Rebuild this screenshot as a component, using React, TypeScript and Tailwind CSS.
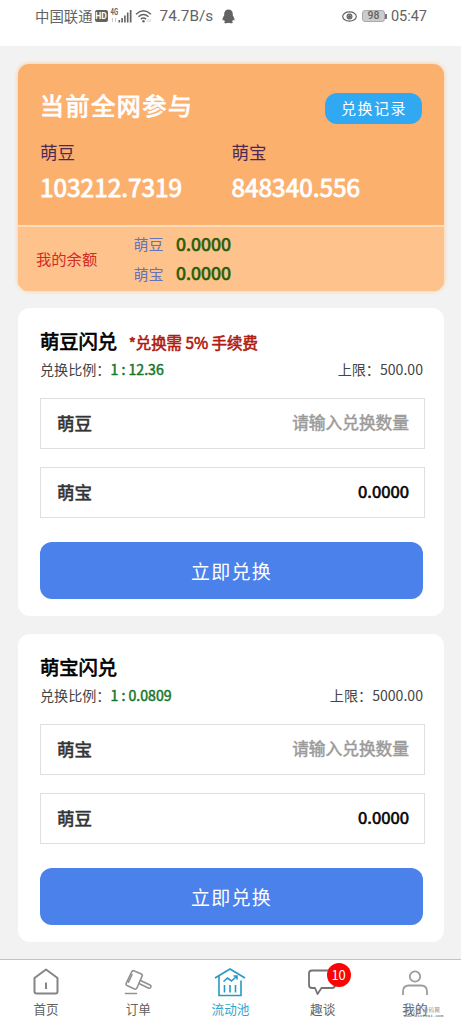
import type { ReactNode } from "react"
import { clsx } from "clsx"

interface SwapCardProps {
  from: string
  to: string
  ratio: string
  limit: string
  note?: string
}

const TOTALS = [
  { label: "萌豆", value: "103212.7319" },
  { label: "萌宝", value: "848340.556" },
]

const BALANCES = [
  { label: "萌豆", value: "0.0000" },
  { label: "萌宝", value: "0.0000" },
]

function StatusBar() {
  return (
    <header className="flex h-[46px] shrink-0 items-start bg-white pl-[35px] pr-[34px] pt-[5px] text-[#636363]">
      <div className="flex h-[22px] flex-1 items-center">
        <span className="text-[14.4px]">中国联通</span>
        <span className="ml-[2px] flex h-[12px] w-[13px] items-center justify-center rounded-[2px] bg-[#626262] font-['Roboto',sans-serif] text-[8.5px] font-bold text-white">
          HD
        </span>
        {/* 4G signal */}
        <svg className="ml-[2px]" width="24" height="16" viewBox="0 0 24 16" fill="currentColor">
          <text x="0.5" y="7" fontSize="8.5" fontWeight="700" fontFamily="Roboto, sans-serif" textLength="7.5" lengthAdjust="spacingAndGlyphs">4G</text>
          <path d="M2 10h1v4H2zM5 10h1v4H5z" opacity=".35" />
          <path d="M8.5 12h1.6v2.5H8.5zM11.3 10h1.6v4.5h-1.6zM14.1 7.5h1.6v7h-1.6zM16.9 4.5h1.6v10h-1.6zM19.8 2h1.7v12.5h-1.7z" />
        </svg>
        {/* Wifi */}
        <svg className="ml-px" width="18" height="16" viewBox="0 0 18 16" fill="none" stroke="currentColor" strokeWidth="1.5">
          <path d="M1 6.2Q8.5-.6 16 6.2M3.5 8.7Q8.5 4.3 13.5 8.7M5.9 11.1Q8.5 9 11.1 11.1" />
          <circle cx="8.5" cy="13.3" r="1.2" fill="currentColor" stroke="none" />
          <path d="M13 11v3M15 11v3" strokeWidth="1" opacity=".3" />
        </svg>
        <span className="ml-[7px] mt-px font-['Roboto',sans-serif] text-[15.3px]">74.7B/s</span>
        <svg className="ml-[9px]" width="13" height="15" viewBox="0 0 13 15" fill="currentColor">
          <path d="M6.5.5C3.8.5 2.200 2.400 2.200 5v1.500C1.200 7.900.4 9.500.5 11c.1.900.8.700 1.400-.2.2.8.6 1.400 1.100 1.900-.7.3-.9.7-.9 1.100 0 .6 3.600.6 4.400 0 .8.6 4.400.6 4.400 0 0-.4-.2-.8-.9-1.100.5-.5.9-1.100 1.100-1.900.6.9 1.300 1.100 1.400.2.1-1.500-.7-3.100-1.700-4.500V5C10.800 2.400 9.200.5 6.500.5z" />
        </svg>
      </div>
      <div className="flex h-[22px] items-center">
        <svg width="15" height="11" viewBox="0 0 15 11" fill="none" stroke="currentColor" strokeWidth="1.2">
          <ellipse cx="7.5" cy="5.5" rx="6.8" ry="4.6" />
          <circle cx="7.5" cy="5.5" r="2.4" />
          <circle cx="7.5" cy="5.5" r="1" fill="currentColor" />
        </svg>
        <span className="ml-[5px] flex h-[12px] w-[23px] items-center justify-center rounded-[3px] border border-[#aaa] bg-[#ccc] font-['Roboto',sans-serif] text-[10.5px] font-medium">
          98
        </span>
        <span className="h-[5px] w-[2px] bg-[#777]" />
        <span className="ml-[4px] mt-px font-['Roboto',sans-serif] text-[14.5px]">05:47</span>
      </div>
    </header>
  )
}

function SummaryCard() {
  return (
    <section className="h-[227px] overflow-hidden rounded-[11px] bg-[#fcb06e] shadow-[0_0_4px_#ffc58d]">
      <div className="h-[161px] pl-[22px] pr-[22px] pt-[23px]">
        <div className="flex h-[36px] items-center justify-between">
          <h1 className="text-[24px] tracking-[1.6px] text-white [-webkit-text-stroke:0.9px]">当前全网参与</h1>
          <button className="mt-[7px] h-[31px] w-[97px] rounded-[12px] bg-[#31a9f2] pl-px text-[15px] tracking-[1.5px] text-white">
            兑换记录
          </button>
        </div>
        <div className="mt-[16px] grid grid-cols-[191.500px_1fr]">
          {TOTALS.map((t) => (
            <div key={t.label}>
              <div className="h-[26px] text-[17.5px] leading-[26px] text-[#4c2a53]">{t.label}</div>
              <div className="h-[44px] text-[24.4px] leading-[44px] text-white [-webkit-text-stroke:0.9px]">{t.value}</div>
            </div>
          ))}
        </div>
      </div>
      <div className="flex h-[66px] items-center border-t-2 border-[#fedbb9] bg-[#fec28c] pb-[2px] pl-[18px]">
        <span className="w-[97.5px] text-[15.3px] text-[#d22a27]">我的余额</span>
        <div>
          {BALANCES.map((b) => (
            <div key={b.label} className="flex h-[29.5px] items-center">
              <span className="mt-[2px] w-[42.5px] text-[15px] text-[#6573bb]">{b.label}</span>
              <span className="text-[18px] text-[#285d06] [-webkit-text-stroke:0.7px]">{b.value}</span>
            </div>
          ))}
        </div>
      </div>
    </section>
  )
}

function Field({ label, children }: { label: string; children: ReactNode }) {
  return (
    <div className="flex h-[51px] w-[385px] items-center justify-between border border-[#dfdfdf] pb-px pl-[16px] pr-[15px]">
      <span className="text-[17.5px] text-[#333] [-webkit-text-stroke:0.6px]">{label}</span>
      {children}
    </div>
  )
}

function SwapCard({ from, to, ratio, limit, note }: SwapCardProps) {
  return (
    <section className="h-[308px] rounded-[12px] bg-white pl-[22px] pt-[18px]">
      <div className="flex h-[30px] items-center">
        <h2 className="text-[19.3px] text-black [-webkit-text-stroke:0.7px]">{from}闪兑</h2>
        {note && <span className="ml-[11.5px] mt-[3px] text-[15.4px] text-[#b01c10] [-webkit-text-stroke:0.6px]">{note}</span>}
      </div>
      <div className="flex h-[28px] w-[383px] items-center justify-between text-[14.1px] text-[#444]">
        <span>
          兑换比例：
          <span className="text-[#19772c] [-webkit-text-stroke:0.5px]">{ratio}</span>
        </span>
        <span>上限：{limit}</span>
      </div>
      <div className="mt-[14px] flex flex-col gap-[18px]">
        <Field label={from}>
          <span className="text-[16.7px] text-[#9b9b9b] [-webkit-text-stroke:0.5px]">请输入兑换数量</span>
        </Field>
        <Field label={to}>
          <span className="text-[16.7px] text-black [-webkit-text-stroke:0.6px]">0.0000</span>
        </Field>
      </div>
      <button className="mt-[24px] h-[57px] w-[383px] rounded-[12px] bg-[#4b81eb] pt-px text-[19px] tracking-[1.3px] text-white">
        立即兑换
      </button>
    </section>
  )
}

const TABS = [
  {
    label: "首页",
    icon: (
      <path d="M15 3.5 3.5 12v13.500q0 2 2 2h19q2 0 2-2V12zM15 16.500v6.500" stroke="#858585" strokeWidth="2" strokeLinejoin="round" />
    ),
  },
  {
    label: "订单",
    icon: (
      <g stroke="#929292" strokeWidth="1.6" strokeLinejoin="round" strokeLinecap="round">
        <path d="m10.800 4.700 7.500 3.300q1.500.7.8 2.200l-5.300 12q-.8 1.500-2.300.8L4 19.500q-1.500-.8-.7-2.300L8.800 5.700q.6-1.500 2-1z" />
        <path d="m9 8.700-3.500 7.500M17.500 14.500 27 19q1.500.8.7 2.300-.9 1.500-2.400.7l-9.300-4.500M2.500 27.500h11" />
      </g>
    ),
  },
  {
    label: "流动池",
    icon: (
      <g stroke="#2799c3" strokeWidth="1.6">
        <path d="M0 12 15 3 30 12M4 10v19.500h22V14.500M8.500 15.500l4-3.500 4 3 5.500-5M18.500 10H22V13.500M9.500 19V26.500M15 19V26.500M20.500 19V26.500" />
      </g>
    ),
  },
  {
    label: "趣谈",
    icon: (
      <path d="M4 4.500h20q3 0 3 3V19q0 3-3 3H13.500L9.500 28 7 22H4q-3 0-3-3V7.500q0-3 3-3z" stroke="#747474" strokeWidth="1.8" strokeLinejoin="round" />
    ),
    badge: 10,
  },
  {
    label: "我的",
    icon: (
      <g stroke="#9c9c9c" strokeWidth="1.8">
        <circle cx="15" cy="10.5" r="5.2" />
        <path d="M3 29v-3.500q0-6 6-6h12q6 0 6 6V29" />
      </g>
    ),
  },
]

function TabBar() {
  return (
    <nav className="grid h-[65px] shrink-0 grid-cols-5 border-t border-[#c2c2c2] bg-white">
      {TABS.map((tab, i) => (
        <div key={tab.label} className="relative flex flex-col items-center pt-[6px]">
          <svg width="32" height="32" viewBox="-1 0 32 32" fill="none">
            {tab.icon}
          </svg>
          <span className={clsx("mt-[1px] text-[12.6px] leading-[20px]", i === 2 ? "text-[#32a4cd]" : "text-[#626262]")}>
            {tab.label}
          </span>
          {tab.badge && (
            <span className="absolute left-[50px] top-[3px] flex h-[24px] w-[24px] items-center justify-center rounded-full bg-[#f90505] text-[13px] text-white">
              {tab.badge}
            </span>
          )}
          {i === 4 && (
            <span className="absolute left-[35px] top-[47px] whitespace-nowrap text-[5.2px] leading-[6px] tracking-[0.6px] text-[#888]">
              源码站 资码网
              <span className="block font-['Liberation_Mono',monospace] text-[4.4px] font-bold leading-[5px] tracking-normal">www.dixizai.com</span>
            </span>
          )}
        </div>
      ))}
    </nav>
  )
}

export default function App() {
  return (
    <div className="flex h-[1024px] w-[461px] flex-col overflow-hidden bg-[#f2f2f2] font-['Noto_Sans_CJK_SC',sans-serif]">
      <StatusBar />
      <main className="flex flex-1 flex-col pl-[18px] pr-[17px] pt-[18px]">
        <SummaryCard />
        <div className="mt-[17px] flex flex-col gap-[18px]">
          <SwapCard from="萌豆" to="萌宝" ratio="1 : 12.36" limit="500.00" note="*兑换需 5% 手续费" />
          <SwapCard from="萌宝" to="萌豆" ratio="1 : 0.0809" limit="5000.00" />
        </div>
      </main>
      <TabBar />
    </div>
  )
}
